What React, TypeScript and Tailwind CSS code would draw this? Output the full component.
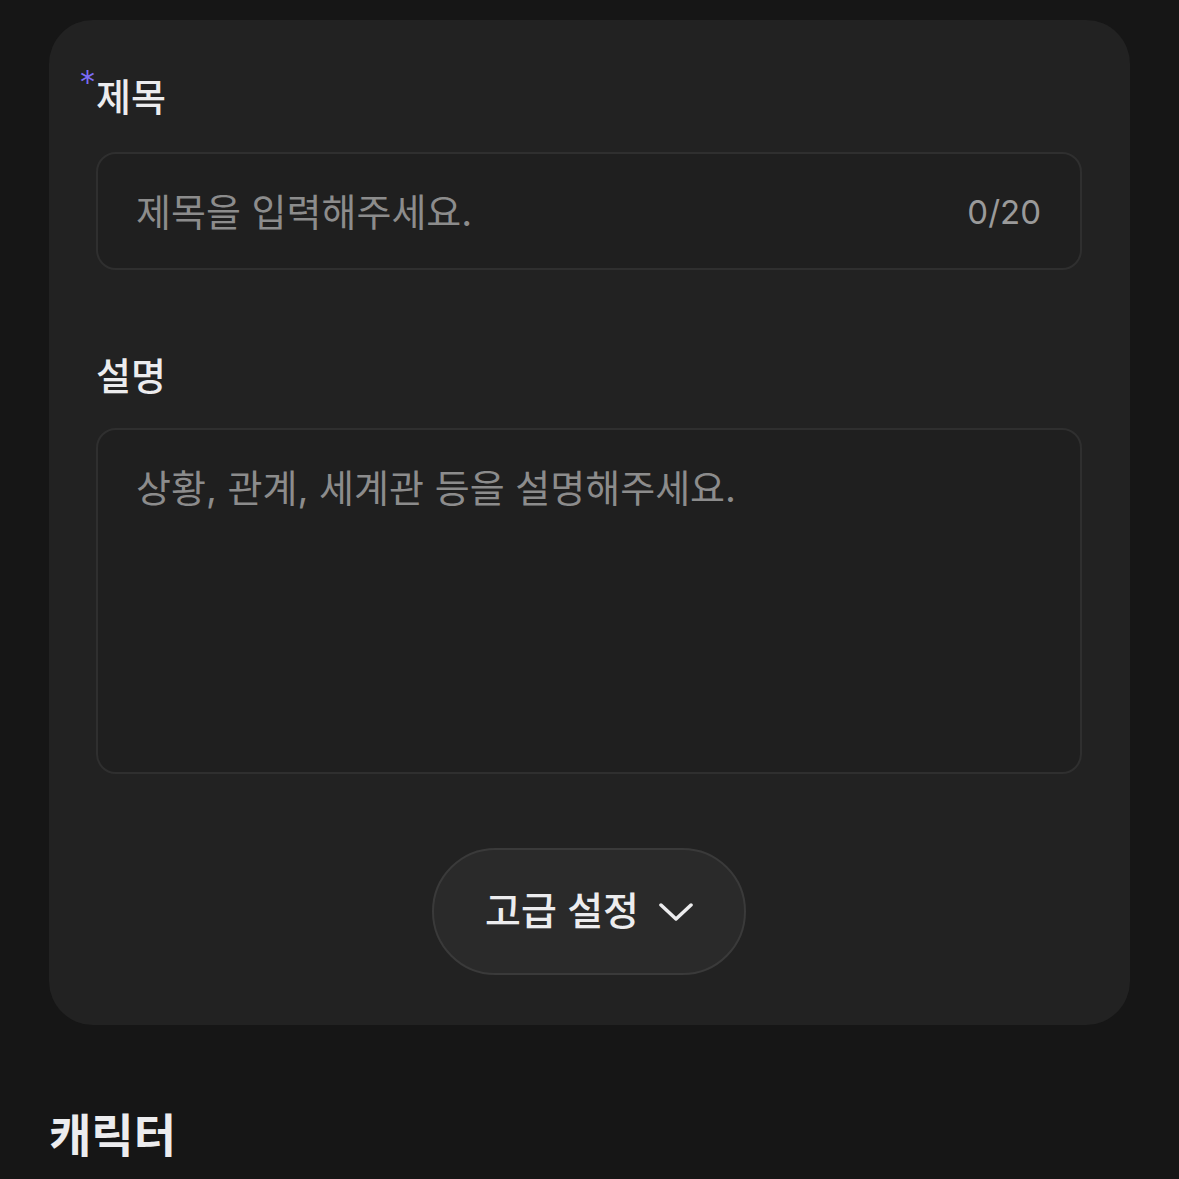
const FONT = "font-['Inter','Noto_Sans_CJK_KR',sans-serif]";

function FieldLabel({ children, required }: { children: string; required?: boolean }) {
  return (
    <div className="relative inline-flex">
      {required && (
        <span className="absolute -left-[17px] -top-[8px] text-[34px] font-light leading-none text-[#7b6cf6]">*</span>
      )}
      <span className="text-[38px] font-medium leading-[46px] text-[#ececee]">{children}</span>
    </div>
  );
}

function Chevron() {
  return (
    <svg width="34" height="20" viewBox="0 0 34 20" fill="none" stroke="currentColor" strokeWidth="3.5" strokeLinecap="round" strokeLinejoin="round">
      <polyline points="2,3 17,17 32,3" />
    </svg>
  );
}

export default function App() {
  return (
    <div className={`min-h-[1179px] bg-[#161616] pt-[20px] ${FONT}`}>
      <div className="mx-[49px] rounded-[44px] bg-[#222222] pb-[50px] pl-[47px] pr-[48px] pt-[54px]">
        <FieldLabel required>제목</FieldLabel>
        <div className="mt-[32px] flex h-[118px] items-center rounded-[20px] border-2 border-[#2f2f2f] bg-[#1f1f1f] pl-[38px] pr-[39px]">
          <input
            className="min-w-0 flex-1 bg-transparent pt-[3px] text-[38px] text-[#ececee] outline-none placeholder:text-[#8c8c8c]"
            placeholder="제목을 입력해주세요."
          />
          <span className="pt-[3px] text-[33px] text-[#9a9a9a]">0/20</span>
        </div>

        <div className="mt-[83px]">
          <FieldLabel>설명</FieldLabel>
        </div>
        <textarea
          className="mt-[29px] block h-[346px] w-full resize-none rounded-[20px] border-2 border-[#2f2f2f] bg-[#1f1f1f] px-[38px] pt-[33px] text-[38px] leading-[50px] text-[#ececee] outline-none placeholder:text-[#8c8c8c]"
          placeholder="상황, 관계, 세계관 등을 설명해주세요."
        />

        <div className="mt-[74px] flex justify-center">
          <button className="flex h-[127px] w-[314px] items-center justify-center gap-[20px] rounded-full border-2 border-[#3a3a3a] bg-[#2a2a2a] text-[39px] font-medium text-[#ececee]">
            <span>고급 설정</span>
            <Chevron />
          </button>
        </div>
      </div>

      <h2 className="ml-[49px] mt-[76px] text-[46px] font-semibold text-[#ececee]">캐릭터</h2>
    </div>
  );
}
